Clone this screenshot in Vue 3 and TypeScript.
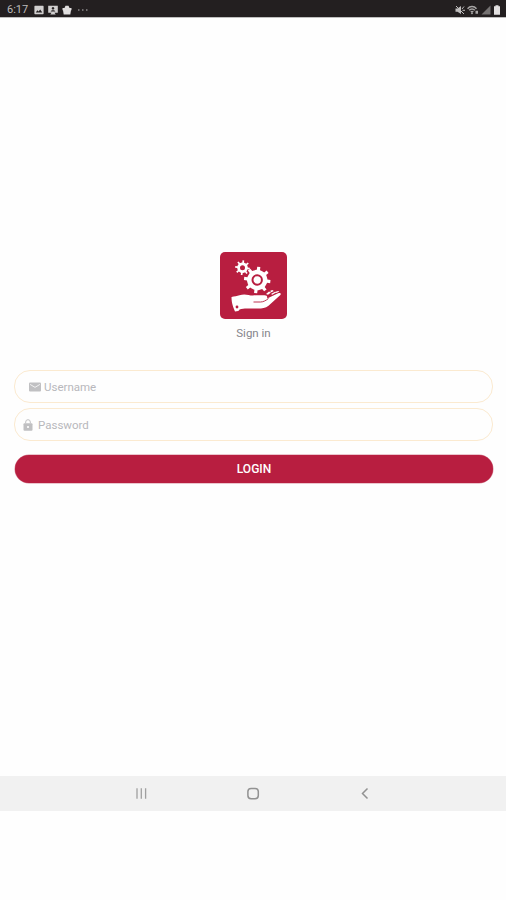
<script setup lang="ts">
import { ref } from 'vue'

const username = ref('')
const password = ref('')

function gear(cx: number, cy: number, outer: number, inner: number, teeth: number, hole: number): string {
  const step = (Math.PI * 2) / teeth
  const points: string[] = []
  const add = (r: number, a: number) =>
    points.push(`${(cx + r * Math.cos(a)).toFixed(2)} ${(cy + r * Math.sin(a)).toFixed(2)}`)
  for (let i = 0; i < teeth; i++) {
    const a = i * step + 0.12
    add(inner, a - step * 0.3)
    add(inner, a - step * 0.2)
    add(outer, a - step * 0.15)
    add(outer, a + step * 0.15)
    add(inner, a + step * 0.2)
    add(inner, a + step * 0.3)
  }
  return `M${points.join('L')}Z M${cx - hole} ${cy}a${hole} ${hole} 0 1 0 ${hole * 2} 0a${hole} ${hole} 0 1 0 ${-hole * 2} 0Z`
}

const smallGear = gear(22.5, 15.7, 7.4, 5.3, 8, 2.5)
const largeGear = gear(37.2, 28, 13.3, 10.2, 8, 5.7)
</script>

<template>
  <div class="screen">
    <header class="status">
      <div class="group">
        <span class="clock">6:17</span>
        <svg class="s-icon" viewBox="0 0 10 10"><path fill="#d2d0d0" fill-rule="evenodd" d="M1 .8h8a.6.6 0 0 1 .6.6v7.2a.6.6 0 0 1-.6.6H1a.6.6 0 0 1-.6-.6V1.4A.6.6 0 0 1 1 .8ZM1.8 7.5h6.5L6.2 4.4 4.6 6.500 3.400 5.300Z" /></svg>
        <svg class="s-icon" viewBox="0 0 10 10"><path fill="#d2d0d0" fill-rule="evenodd" d="M.2.8h9.600v7H6.500L7.700 9.500H2.300L3.500 7.800H.2ZM5 2a1.300 1.300 0 1 0 .01 0ZM2.700 6.600h4.600C7 4.800 3 4.800 2.700 6.600Z" /></svg>
        <svg class="s-icon" viewBox="0 0 10 10"><path fill="#e0dede" d="M.5 3h2L3.500.8h3l1 2.200h2v2.200H9L8.300 9.500H1.700L1 5.200H.5Z" /></svg>
        <svg class="dots" viewBox="0 0 10 10"><path fill="#8b8888" d="M0 4.300h1.500v1.500H0ZM4 4.300h1.500v1.500H4ZM8 4.300h1.500v1.500H8Z" /></svg>
      </div>
      <div class="group right">
        <svg class="r-icon" viewBox="0 0 10 10"><path fill="#bfbdbd" d="M.5 3.500h2L6 1v8L2.500 6.700h-2Z" /><path d="m1 1 8 8M9 1.500 7 4M7.500 5.300H10" stroke="#bfbdbd" /></svg>
        <svg class="r-icon wifi" viewBox="0 0 12 10"><path d="M.5 3.700C3 .8 7 .8 9.500 3.700M2.200 5.300c1.600-1.700 4-1.700 5.600 0M3.800 7c.8-.7 1.700-.7 2.500 0" fill="none" stroke="#a7a5a5" stroke-width="1.500" /><path d="M5 7 6.200 8.200 5 9.400 3.800 8.200ZM8.500 5.800h2.500v3H8.500Z" fill="#a7a5a5" /></svg>
        <svg class="r-icon" viewBox="0 0 10 10"><path d="M9.500.5v9h-9Z" fill="#747171" /></svg>
        <svg class="battery" viewBox="0 0 8 10"><path d="M2.500.3h3v1H7v8.400H1V1.300h1.500Z" fill="#e2e0e0" /></svg>
      </div>
    </header>

    <main class="content">
      <svg class="logo" viewBox="0 0 67 67">
        <rect width="67" height="67" rx="5" fill="#b81e40" />
        <g fill="#fff" fill-rule="evenodd">
          <path :d="smallGear" />
          <path :d="largeGear" />
          <circle cx="37.200" cy="28" r="3.700" />
          <path d="M11.500 45c3-.6 5.500-.7 8-1.700 3-1.100 6-1 9-.3 3 .8 6 .4 9 .3h7c2.300 0 3 1.300 2.600 3.100l11-5.200c1.900-.8 3.300.1 2.300 1.700L48.500 53.700C45.500 56 42 56.500 38 56.500H27c-3 0-5 .3-7.500 1.100-.4 1.500-2 1.500-4.500 2-1.500-4-3.500-8-3.500-14.600Z" />
          <path d="m46 42 3-2.500 2 1-3 2.200ZM50 39l2.200-.9 1.600 1-2.300 1.200ZM51 42l4-2.200 1.200.8-4 2.200ZM55.500 39.700l2.800-.8 1 .7-3 1.500Z" />
        </g>
        <path d="M33.500 50h7c3 0 5.500-1.600 8-3.500" fill="none" stroke="#b81e40" stroke-width=".9" />
        <circle cx="17" cy="55" r="1.400" fill="#b81e40" />
      </svg>
      <h1 class="title">Sign in</h1>

      <form class="form" @submit.prevent>
        <label class="field username">
          <svg class="mail" viewBox="0 0 13 10"><rect width="13" height="10" rx="1.200" fill="#c0c0c2" /><path d="m1.200 2.200 5.300 3.200 5.300-3.200" fill="none" stroke="#f5f5f5" stroke-width="1" /></svg>
          <input v-model="username" type="text" placeholder="Username" />
        </label>
        <label class="field password">
          <svg class="lock" viewBox="0 0 10 12"><rect x=".5" y="4.200" width="9" height="7.500" rx="1" fill="#c0c0c2" /><path d="M2.700 4.300V3a2.300 2.300 0 0 1 4.600 0v1.300" fill="none" stroke="#c0c0c2" stroke-width="1" /><circle cx="5" cy="8" r="1.100" fill="#fff" /></svg>
          <input v-model="password" type="password" placeholder="Password" />
        </label>
        <button class="login" type="submit">LOGIN</button>
      </form>
    </main>

    <nav class="navbar">
      <svg viewBox="0 0 14 14"><path d="M3 1.200v10.600M7.300 1.200v10.600M11.600 1.200v10.600" stroke="#a0a0a0" stroke-width="1.300" /></svg>
      <svg viewBox="0 0 14 14"><rect x="1.900" y="1.400" width="10.400" height="10.400" rx="3.200" fill="none" stroke="#929292" stroke-width="1.500" /></svg>
      <svg viewBox="0 0 14 14"><path d="M9.500 1.500 4.500 6.500l5 5" fill="none" stroke="#929292" stroke-width="1.500" /></svg>
    </nav>
  </div>
</template>

<style>
body {
  background: #fefefe;
}
</style>

<style scoped>
.screen {
  display: flex;
  flex-direction: column;
  height: 900px;
  background: #fefefe;
  font-family: Roboto, "Liberation Sans", sans-serif;
}
.status {
  display: flex;
  justify-content: space-between;
  box-sizing: border-box;
  height: 17px;
  padding: 2px 5px 0 7px;
  background: #231f20;
  box-shadow: 0 1px 0 #bfbebe;
}
.group {
  display: flex;
  align-items: center;
  gap: 4px;
}
.clock {
  width: 23px;
  color: #bdbbbb;
  font-size: 11px;
  line-height: 15px;
}
.s-icon {
  width: 10px;
  height: 10px;
}
.dots {
  width: 10px;
  height: 10px;
  margin-left: 2px;
}
.right {
  gap: 2px;
}
.r-icon {
  width: 10px;
  height: 10px;
}
.wifi {
  width: 12px;
}
.battery {
  width: 8px;
  height: 10px;
}
.content {
  display: flex;
  flex-direction: column;
  align-items: center;
  box-sizing: border-box;
  height: 759px;
  padding: 235px 13px 0 14px;
}
.logo {
  width: 67px;
  height: 67px;
}
.title {
  margin: 6px 0 0;
  color: #85858b;
  font-size: 11.5px;
  font-weight: 400;
  line-height: 16px;
}
.form {
  display: flex;
  flex-direction: column;
  width: 100%;
  margin-top: 29px;
}
.field {
  display: flex;
  align-items: center;
  box-sizing: border-box;
  height: 33px;
  border: 1px solid #fbead0;
  border-radius: 16px;
  background: #fefefe;
}
.username {
  padding-left: 14px;
  gap: 3px;
}
.password {
  margin-top: 5px;
  padding-left: 8px;
  gap: 5px;
}
.mail {
  width: 12px;
  height: 10px;
}
.lock {
  width: 10px;
  height: 12px;
}
input {
  flex: 1;
  min-width: 0;
  padding: 0;
  border: 0;
  outline: 0;
  background: transparent;
  color: #77777d;
  font: 11.5px/16px Roboto, "Liberation Sans", sans-serif;
}
input::placeholder {
  color: #b8b8bc;
  opacity: 1;
}
.login {
  height: 28px;
  margin: 14px 0 0 1px;
  padding: 1px 0 0;
  border: 0;
  border-radius: 14px;
  background: #b81e40;
  box-shadow: 0 0 0 0.5px #d88b9b;
  color: #fff;
  font: 500 12px/27px Roboto, "Liberation Sans", sans-serif;
}
.navbar {
  display: flex;
  align-items: center;
  justify-content: center;
  gap: 98px;
  height: 35px;
  background: #f1f1f1;
}
.navbar svg {
  width: 14px;
  height: 14px;
}
</style>
